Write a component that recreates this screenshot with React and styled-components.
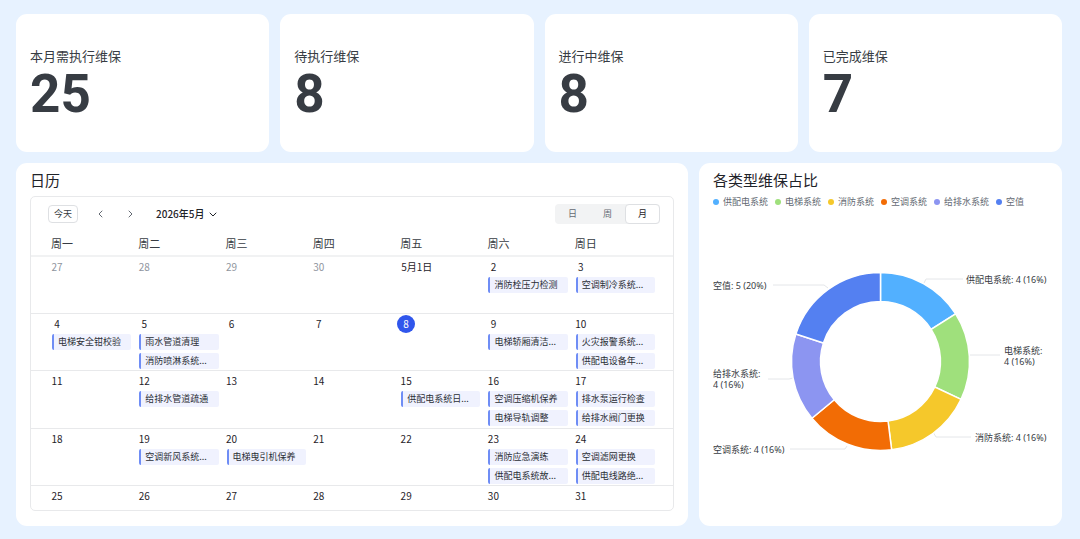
import React from "react";
import styled, { createGlobalStyle } from "styled-components";

const GlobalStyle = createGlobalStyle`
  * {
    box-sizing: border-box;
  }

  body {
    margin: 0;
    background-color: #e7f2ff;
    color: #1f2329;
    font-family: "Noto Sans CJK SC", sans-serif;
  }

  button {
    font-family: inherit;
    cursor: pointer;
  }
`;

const Page = styled("main")`
  display: flex;
  flex-direction: column;
  gap: 11px;
  min-height: 100vh;
  padding: 14px 18px 13px 16px;
`;

const Stats = styled("section")`
  display: grid;
  grid-template-columns: repeat(4, 1fr);
  gap: 11px;
`;

const Card = styled("div")`
  background-color: white;
  border-radius: 11px;
`;

const StatCard = styled(Card)`
  display: flex;
  flex-direction: column;
  justify-content: center;
  min-height: 138px;
  padding: 2px 14px 0;
`;

const StatLabel = styled("div")`
  font-size: 13px;
  line-height: 20px;
  color: #373c43;
`;

const StatValue = styled("div")`
  font-family: Roboto, sans-serif;
  font-size: 53px;
  font-weight: 700;
  line-height: 56px;
  color: #373c43;
`;

const Panels = styled("section")`
  display: grid;
  grid-template-columns: 672fr 363fr;
  gap: 11px;
  flex: 1;
`;

const Panel = styled(Card)`
  display: flex;
  flex-direction: column;
  min-width: 0;
  padding: 7px 14px 15px;
`;

const Title = styled("h2")`
  margin: 0;
  font-size: 15px;
  font-weight: 400;
  line-height: 20px;
`;

const CalendarBox = styled("div")`
  display: flex;
  flex-direction: column;
  flex: 1;
  margin-top: 6px;
  border: 1px solid #e8e9eb;
  border-radius: 5px;
`;

const Toolbar = styled("div")`
  display: flex;
  align-items: center;
  height: 34px;
  padding: 0 13px 0 17px;
`;

const TodayButton = styled("button")`
  width: 30px;
  height: 18px;
  padding: 0;
  border: 1px solid #dee0e3;
  border-radius: 4px;
  background-color: white;
  color: #373c43;
  font-size: 9px;
  line-height: 16px;
`;

const ArrowButton = styled("button")`
  display: flex;
  align-items: center;
  justify-content: center;
  width: 16px;
  height: 16px;
  margin-left: 14px;
  padding: 0;
  border: none;
  background: none;
  color: #646a73;
`;

const MonthButton = styled("button")`
  display: flex;
  align-items: center;
  gap: 4px;
  margin-left: 18px;
  padding: 0;
  border: none;
  background: none;
  color: #1f2329;
  font-size: 10px;
  font-weight: 500;
  line-height: 16px;
`;

const Switcher = styled("div")`
  display: flex;
  margin-left: auto;
  border-radius: 4px;
  background-color: #f2f3f4;
`;

const SwitchButton = styled("button")`
  width: 35px;
  height: 20px;
  padding: 0;
  border: 1px solid ${(props) => (props.$active ? "#dee0e3" : "transparent")};
  border-radius: 4px;
  background-color: ${(props) => (props.$active ? "white" : "transparent")};
  color: ${(props) => (props.$active ? "#1f2329" : "#646a73")};
  font-size: 9px;
  line-height: 18px;
`;

const Table = styled("table")`
  display: flex;
  flex-direction: column;
  flex: 1;
`;

const TableHead = styled("thead")`
  display: block;
`;

const TableBody = styled("tbody")`
  display: grid;
  grid-template-rows: repeat(4, 1fr) 25px;
  flex: 1;
`;

const Week = styled("tr")`
  display: grid;
  grid-template-columns: repeat(7, minmax(0, 1fr));
  padding: 0 14px 0 17px;
`;

const BodyWeek = styled(Week)`
  border-top: 1px solid #e8e9eb;

  &:first-child {
    border-top: 2px solid #f1f2f3;
  }
`;

const WeekDay = styled("th")`
  padding: 0 3px;
  color: #373c43;
  font-size: 11px;
  font-weight: 400;
  line-height: 24px;
  text-align: left;
`;

const Day = styled("td")`
  display: flex;
  flex-direction: column;
  gap: 3px;
  padding: 1px 0 0;
`;

const DateLabel = styled("span")`
  align-self: flex-start;
  min-width: 18px;
  margin-bottom: -2px;
  padding: ${(props) => (props.$long ? "0 4px" : "0")};
  border-radius: 9px;
  background-color: ${(props) => (props.$today ? "#3056ec" : "transparent")};
  color: ${(props) =>
    props.$today ? "white" : props.$muted ? "#8f959e" : "#1f2329"};
  font-size: 10px;
  line-height: 18px;
  text-align: center;
`;

const Event = styled("div")`
  height: 16px;
  margin: 0 4px;
  padding-left: 4px;
  border-left: 2px solid #6f8df5;
  border-radius: 2px;
  background-color: #f0f2fe;
  color: #2b2f36;
  font-size: 9px;
  line-height: 16px;
  white-space: nowrap;
`;

const Legend = styled("ul")`
  display: flex;
  flex-wrap: wrap;
  gap: 0 7px;
  margin: 5px 0 0;
  padding: 0;
  list-style: none;
`;

const LegendItem = styled("li")`
  display: flex;
  align-items: center;
  gap: 4px;
  color: #646a73;
  font-size: 9px;
  line-height: 14px;

  &::before {
    content: "";
    width: 6px;
    height: 6px;
    border-radius: 50%;
    background-color: ${(props) => props.$color};
  }
`;

const Chart = styled("svg")`
  display: block;
  flex: 1;
  width: 100%;
  min-height: 0;

  & text {
    font-family: "Noto Sans", "Noto Sans CJK SC", sans-serif;
    font-size: 9px;
    fill: #373c43;
  }

  & polyline {
    fill: none;
    stroke: #e4e6e9;
  }
`;

const stats = [
  { label: "本月需执行维保", value: 25 },
  { label: "待执行维保", value: 8 },
  { label: "进行中维保", value: 8 },
  { label: "已完成维保", value: 7 },
];

const weekDays = ["周一", "周二", "周三", "周四", "周五", "周六", "周日"];

const events = {
  2: ["消防栓压力检测"],
  3: ["空调制冷系统..."],
  4: ["电梯安全钳校验"],
  5: ["雨水管道清理", "消防喷淋系统..."],
  9: ["电梯轿厢清洁..."],
  10: ["火灾报警系统...", "供配电设备年..."],
  12: ["给排水管道疏通"],
  15: ["供配电系统日..."],
  16: ["空调压缩机保养", "电梯导轨调整"],
  17: ["排水泵运行检查", "给排水阀门更换"],
  19: ["空调新风系统..."],
  20: ["电梯曳引机保养"],
  23: ["消防应急演练", "供配电系统故..."],
  24: ["空调滤网更换", "供配电线路绝..."],
};

const today = 8;

// April 27 is the first cell, so May 1 has offset 4
const weeks = [0, 1, 2, 3, 4].map((week) =>
  weekDays.map((_, i) => week * 7 + i - 3)
);

const slices = [
  {
    name: "供配电系统",
    value: 4,
    color: "#52b0ff",
    line: "211,74 213,70 250,70",
    x: 253,
    y: 74,
    text: ["供配电系统: 4 (16%)"],
  },
  {
    name: "电梯系统",
    value: 4,
    color: "#9fe07c",
    line: "257,146 287,146",
    x: 291,
    y: 145,
    text: ["电梯系统:", "4 (16%)"],
  },
  {
    name: "消防系统",
    value: 4,
    color: "#f5c82b",
    line: "220,223 223,228 258,228",
    x: 262,
    y: 232,
    text: ["消防系统: 4 (16%)"],
  },
  {
    name: "空调系统",
    value: 4,
    color: "#f26c05",
    line: "134,237 132,240 77,240",
    x: 0,
    y: 244,
    text: ["空调系统: 4 (16%)"],
  },
  {
    name: "给排水系统",
    value: 4,
    color: "#8c95f1",
    line: "80,169 76,170 55,170",
    x: 0,
    y: 168,
    text: ["给排水系统:", "4 (16%)"],
  },
  {
    name: "空值",
    value: 5,
    color: "#5480f1",
    line: "115,79 111,76 60,76",
    x: 0,
    y: 80,
    text: ["空值: 5 (20%)"],
  },
];

const center = { x: 167.5, y: 152.5 };

const point = (share, radius) => {
  const angle = share * Math.PI * 2;
  return `${center.x + radius * Math.sin(angle)} ${
    center.y - radius * Math.cos(angle)
  }`;
};

const slicePath = (from, to) =>
  `M${point(from, 89)} A89 89 0 0 1 ${point(to, 89)} L${point(to, 60)} ` +
  `A60 60 0 0 0 ${point(from, 60)} Z`;

function Chevron({ points, width, height }) {
  return (
    <svg
      width={width}
      height={height}
      viewBox={`0 0 ${width} ${height}`}
      fill="none"
      stroke="currentColor"
    >
      <polyline points={points} strokeLinecap="round" strokeLinejoin="round" />
    </svg>
  );
}

function Calendar() {
  const dateText = (day) => {
    if (day < 1) return day + 30;
    return day === 1 ? "5月1日" : day;
  };

  return (
    <CalendarBox>
      <Toolbar>
        <TodayButton>今天</TodayButton>
        <ArrowButton aria-label="上个月">
          <Chevron width={5} height={8} points="4,1 1,4 4,7" />
        </ArrowButton>
        <ArrowButton aria-label="下个月">
          <Chevron width={5} height={8} points="1,1 4,4 1,7" />
        </ArrowButton>
        <MonthButton>
          2026年5月
          <Chevron width={8} height={5} points="1,1 4,4 7,1" />
        </MonthButton>
        <Switcher>
          <SwitchButton>日</SwitchButton>
          <SwitchButton>周</SwitchButton>
          <SwitchButton $active>月</SwitchButton>
        </Switcher>
      </Toolbar>

      <Table>
        <TableHead>
          <Week>
            {weekDays.map((name) => (
              <WeekDay key={name}>{name}</WeekDay>
            ))}
          </Week>
        </TableHead>
        <TableBody>
          {weeks.map((days) => (
            <BodyWeek key={days[0]}>
              {days.map((day) => (
                <Day key={day}>
                  <DateLabel
                    $muted={day < 1}
                    $today={day === today}
                    $long={day === 1}
                  >
                    {dateText(day)}
                  </DateLabel>
                  {(events[day] || []).map((name) => (
                    <Event key={name}>{name}</Event>
                  ))}
                </Day>
              ))}
            </BodyWeek>
          ))}
        </TableBody>
      </Table>
    </CalendarBox>
  );
}

function Donut() {
  const total = slices.reduce((sum, slice) => sum + slice.value, 0);
  let passed = 0;

  return (
    <Chart viewBox="0 0 335 302">
      {slices.map((slice) => {
        const from = passed / total;
        passed += slice.value;
        return (
          <g key={slice.name}>
            <polyline points={slice.line} />
            <path
              d={slicePath(from, passed / total)}
              fill={slice.color}
              stroke="white"
              strokeWidth="1.5"
            />
            {slice.text.map((line, i) => (
              <text key={line} x={slice.x} y={slice.y + i * 11}>
                {line}
              </text>
            ))}
          </g>
        );
      })}
    </Chart>
  );
}

export default function App() {
  return (
    <Page>
      <GlobalStyle />
      <Stats>
        {stats.map((stat) => (
          <StatCard key={stat.label}>
            <StatLabel>{stat.label}</StatLabel>
            <StatValue>{stat.value}</StatValue>
          </StatCard>
        ))}
      </Stats>

      <Panels>
        <Panel>
          <Title>日历</Title>
          <Calendar />
        </Panel>

        <Panel>
          <Title>各类型维保占比</Title>
          <Legend>
            {slices.map((slice) => (
              <LegendItem key={slice.name} $color={slice.color}>
                {slice.name}
              </LegendItem>
            ))}
          </Legend>
          <Donut />
        </Panel>
      </Panels>
    </Page>
  );
}
